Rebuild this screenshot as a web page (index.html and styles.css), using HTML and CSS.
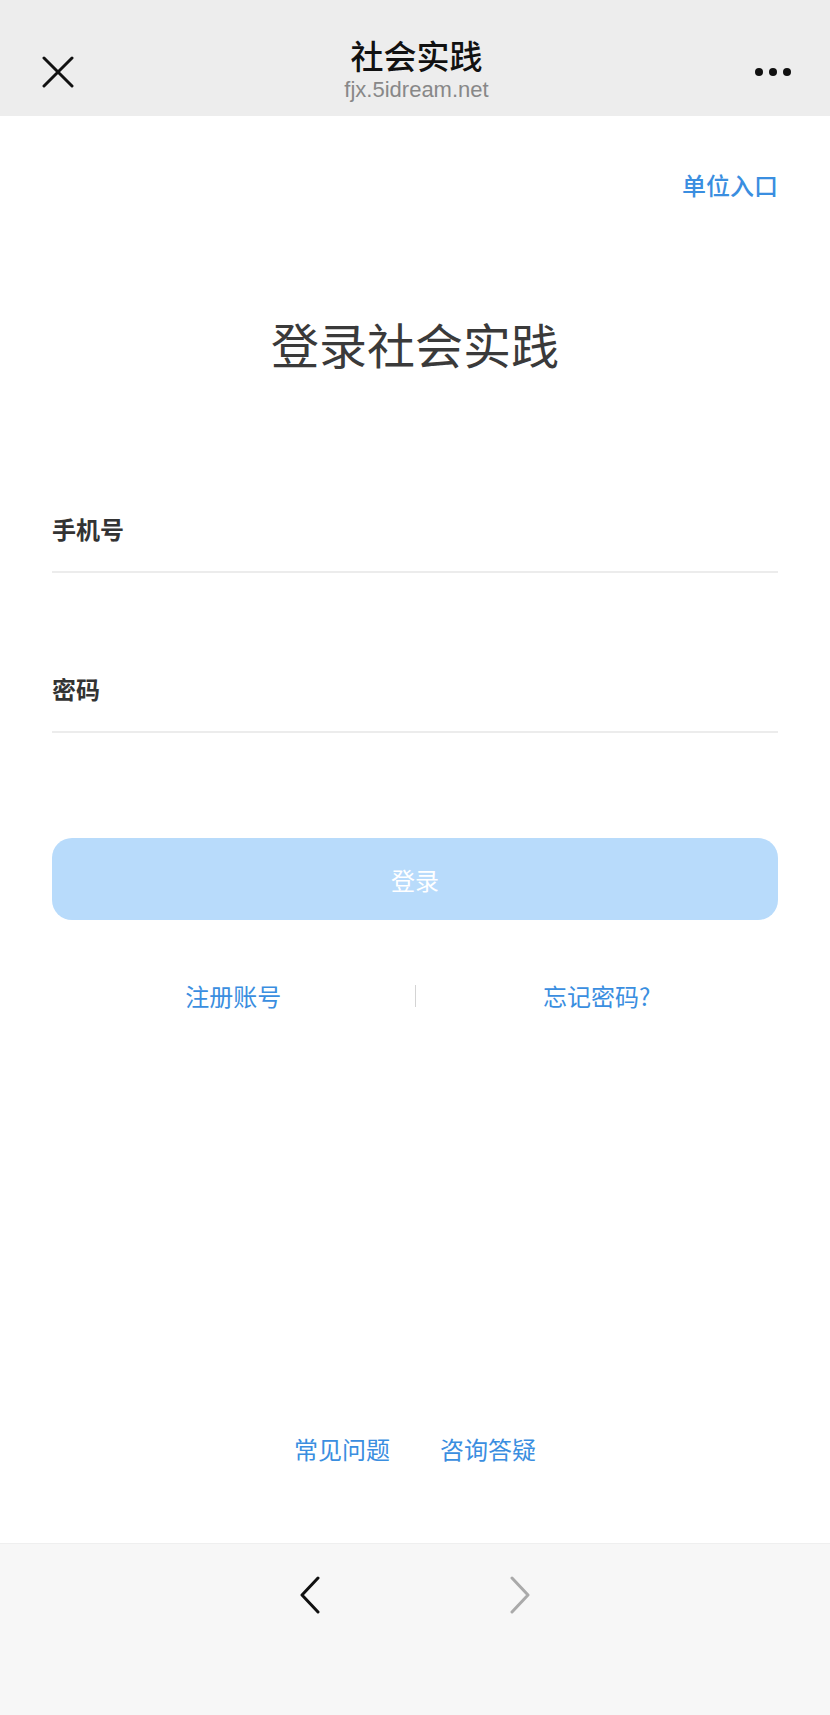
FILE: index.html
```html
<!DOCTYPE html>
<html lang="zh-CN">
	<head>
		<meta charset="UTF-8" />
		<meta name="viewport" content="width=device-width, initial-scale=1.0" />
		<title>社会实践</title>
		<link rel="stylesheet" href="styles.css">
	</head>
	<body>
		<header class="topbar">
			<div class="topbar-close">
				<svg width="32" height="32" viewBox="0 0 32 32">
					<path d="M2 2 L30 30 M30 2 L2 30" stroke="#111" stroke-width="3" stroke-linecap="round" fill="none" />
				</svg>
			</div>
			<div class="topbar-title">
				<div class="title">社会实践</div>
				<div class="url">fjx.5idream.net</div>
			</div>
			<div class="topbar-more">
				<span class="dot"></span><span class="dot"></span><span class="dot"></span>
			</div>
		</header>

		<main class="login">
			<div class="unit-row">
				<a class="unit-link">单位入口</a>
			</div>

			<h1 class="login-title">登录社会实践</h1>

			<div class="field field-phone">
				<label>手机号</label>
			</div>
			<div class="field field-pwd">
				<label>密码</label>
			</div>

			<button class="login-button">登录</button>

			<div class="link-row">
				<a class="link">注册账号</a>
				<span class="divider"></span>
				<a class="link">忘记密码?</a>
			</div>

			<div class="help-row">
				<a class="link">常见问题</a>
				<a class="link">咨询答疑</a>
			</div>
		</main>

		<footer class="navbar">
			<svg class="nav-back" width="22" height="38" viewBox="0 0 22 38">
				<polyline points="19,2 3,19 19,36" stroke="#111" stroke-width="3" stroke-linecap="round" stroke-linejoin="round" fill="none" />
			</svg>
			<svg class="nav-forward" width="22" height="38" viewBox="0 0 22 38">
				<polyline points="3,2 19,19 3,36" stroke="#aaa" stroke-width="3" stroke-linecap="round" stroke-linejoin="round" fill="none" />
			</svg>
		</footer>
	</body>
</html>
```

FILE: styles.css
```css
body {
	margin: 0;
	height: 1715px;
	display: flex;
	flex-direction: column;
	font-family: "Noto Sans CJK SC", "Noto Sans", sans-serif;
	background: #fff;
	color: #333;
}

a {
	cursor: pointer;
}

.topbar {
	height: 116px;
	box-sizing: border-box;
	padding: 22px 39px 0 42px;
	background: #ededed;
	display: grid;
	grid-template-columns: 1fr auto 1fr;
	align-items: center;
}
.topbar-close {
	display: flex;
	align-items: center;
	margin-top: 6px;
}
.topbar-title {
	text-align: center;
}
.title {
	font-size: 33px;
	line-height: 38px;
	color: #111;
	font-weight: 500;
}
.url {
	font-family: "Liberation Sans", Arial, sans-serif;
	font-size: 22px;
	line-height: 24px;
	color: #888;
	margin-top: 4px;
}
.topbar-more {
	display: flex;
	justify-content: flex-end;
	gap: 6px;
	margin-top: 6px;
}
.dot {
	width: 8px;
	height: 8px;
	border-radius: 50%;
	background: #111;
}

.login {
	flex: 1;
	display: flex;
	flex-direction: column;
	padding: 0 52px;
}
.unit-row {
	margin-top: 54px;
	display: flex;
	justify-content: flex-end;
}
.unit-link {
	font-size: 24px;
	line-height: 30px;
	font-weight: 500;
	color: #3a8ee0;
}
.login-title {
	margin: 113px 0 0;
	font-size: 48px;
	line-height: 60px;
	font-weight: 400;
	text-align: center;
	color: #3a3a3a;
}
.field {
	border-bottom: 2px solid #ececec;
	padding-bottom: 27px;
}
.field label {
	display: block;
	font-size: 24px;
	line-height: 30px;
	font-weight: 700;
	color: #333;
}
.field-phone {
	margin-top: 141px;
}
.field-pwd {
	margin-top: 101px;
}
.login-button {
	margin-top: 105px;
	height: 82px;
	border: none;
	border-radius: 20px;
	background: #b8dbfb;
	color: #fff;
	font-family: inherit;
	font-size: 24px;
}
.link-row {
	margin-top: 61px;
	display: grid;
	grid-template-columns: 1fr 1px 1fr;
	align-items: center;
	text-align: center;
}
.link {
	font-size: 24px;
	line-height: 30px;
	color: #3a8ee0;
}
.divider {
	height: 22px;
	background: #d4d4d4;
}
.help-row {
	margin-top: auto;
	margin-bottom: 79px;
	display: flex;
	justify-content: center;
	gap: 50px;
}

.navbar {
	height: 172px;
	box-sizing: border-box;
	background: #f7f7f7;
	border-top: 1px solid #efefef;
	padding-top: 32px;
	display: flex;
	justify-content: center;
	align-items: flex-start;
	gap: 188px;
}
```
